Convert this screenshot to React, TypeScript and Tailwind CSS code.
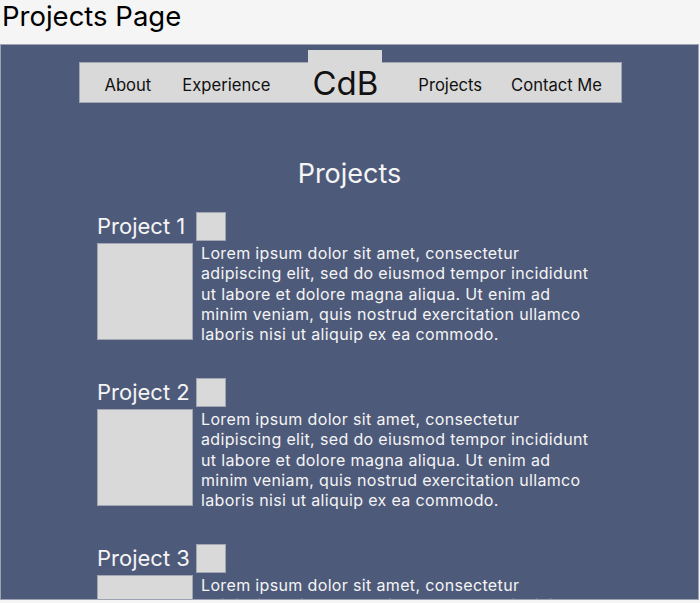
import React from "react";

const lorem =
  "Lorem ipsum dolor sit amet, consectetur adipiscing elit, sed do eiusmod tempor incididunt ut labore et dolore magna aliqua. Ut enim ad minim veniam, quis nostrud exercitation ullamco laboris nisi ut aliquip ex ea commodo.";

function Project({ n }: { n: number }) {
  return (
    <div className="flex flex-col h-[166px] shrink-0">
      <div className="flex items-start h-[29px] shrink-0">
        <span className="w-[99px] shrink-0 mt-[1px] text-[22px] leading-[26px] text-[#f5f5f5] whitespace-nowrap">Project {n}</span>
        <div className="w-[30px] h-[29px] bg-[#d9d9d9] border border-[#a3a6b3]" />
      </div>
      <div className="flex mt-[2px] shrink-0">
        <div className="w-[96px] h-[97px] shrink-0 bg-[#d9d9d9] border border-[#a3a6b3]" />
        <p className="ml-[8px] pt-[0px] w-[396px] text-[16px] leading-[20.25px] tracking-[0.35px] text-[#f5f5f5]">{lorem}</p>
      </div>
    </div>
  );
}

export default function App() {
  return (
    <div className="w-[700px] h-[603px] bg-[#f5f5f5] overflow-hidden" style={{ fontFamily: "Inter, 'Noto Sans', sans-serif" }}>
      <div className="h-[44px] pl-[2px] text-[27.5px] leading-[31px] text-black pt-[1px]">Projects Page</div>
      <div className="w-[699px] h-[556px] bg-[#4e5a7a] border border-[#9ea3b4] overflow-hidden flex flex-col items-center">
        <nav className="shrink-0 mt-[17px] ml-[1px] w-[543px] h-[41px] bg-[#d9d9d9] border border-[#a3a6b3] flex items-stretch pl-[25px] text-[16.6px] text-[#111]">
          <span className="self-center mt-[5px]">About</span>
          <span className="self-center mt-[5px] ml-[31px]">Experience</span>
          <div className="ml-[38px] w-[74px] shrink-0 -mt-[13px] bg-[#d9d9d9] flex items-end justify-center pb-[1px]">
            <span className="text-[33px] leading-[36px]">CdB</span>
          </div>
          <span className="self-center mt-[5px] ml-[36px]">Projects</span>
          <span className="self-center mt-[5px] ml-[29px]">Contact Me</span>
        </nav>
        <h1 className="shrink-0 mt-[54px] text-[27px] leading-[34px] text-[#f5f5f5]">Projects</h1>
        <div className="shrink-0 self-start ml-[96px] mt-[21px] flex flex-col">
          <Project n={1} />
          <Project n={2} />
          <Project n={3} />
        </div>
      </div>
    </div>
  );
}
